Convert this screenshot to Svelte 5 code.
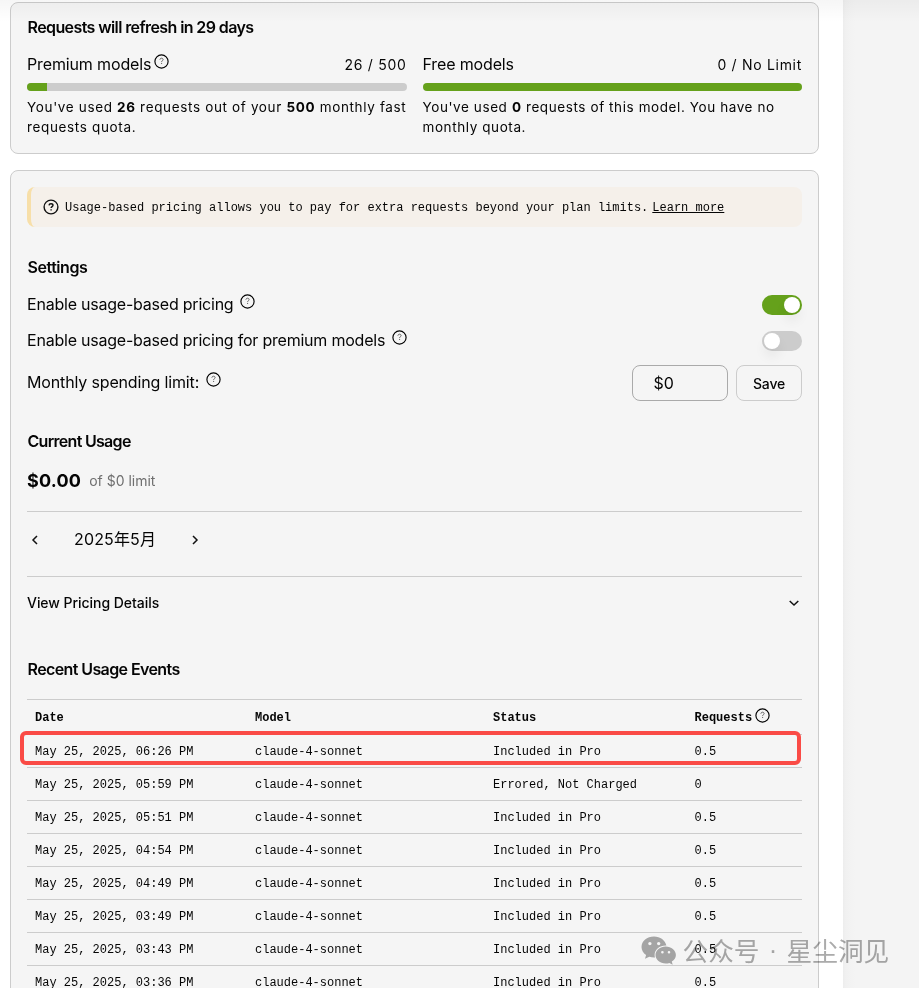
<script>
  const events = [
    ['06:26', 'Included in Pro', '0.5'],
    ['05:59', 'Errored, Not Charged', '0'],
    ['05:51', 'Included in Pro', '0.5'],
    ['04:54', 'Included in Pro', '0.5'],
    ['04:49', 'Included in Pro', '0.5'],
    ['03:49', 'Included in Pro', '0.5'],
    ['03:43', 'Included in Pro', '0.5'],
    ['03:36', 'Included in Pro', '0.5']
  ];
  const used = 26;
  const quota = 500;
</script>

{#snippet help()}
  <svg class="help" width="15" height="15" viewBox="0 0 15 15" fill="none">
    <circle cx="7.5" cy="7.5" r="6.6" stroke="#000" stroke-width="1.15" />
    <path d="M5.900 5.700C6 4.700 6.700 4.200 7.500 4.200c.9 0 1.600.5 1.600 1.300 0 1.100-1.500 1.200-1.500 2.600M7.600 9v1" stroke="#555" stroke-width=".9" />
  </svg>
{/snippet}

<div class="page">
  <main>
    <section class="card quota">
      <h2 class="t-refresh">Requests will refresh in 29 days</h2>
      <div class="models">
        <div class="model">
          <div class="head"><span class="name">Premium models {@render help()}</span><span class="count">{used} / {quota}</span></div>
          <div class="bar"><div class="fill" style="width: {(used / quota) * 100}%"></div></div>
          <p>You've used <b>{used}</b> requests out of your <b>{quota}</b> monthly fast<br />requests quota.</p>
        </div>
        <div class="model free">
          <div class="head"><span class="name">Free models</span><span class="count">0 / No Limit</span></div>
          <div class="bar"><div class="fill" style="width: 100%"></div></div>
          <p>You've used <b>0</b> requests of this model. You have no<br />monthly quota.</p>
        </div>
      </div>
    </section>

    <section class="card usage">
      <div class="notice">
        <svg width="16" height="16" viewBox="0 0 16 16" fill="none" stroke="#111" stroke-width="1.4">
          <circle cx="8" cy="8" r="6.9" />
          <path d="M6 6.4C6.1 5.2 7 4.700 8 4.700c1.100 0 2 .6 2 1.600 0 1.200-1.900 1.400-1.900 2.700M8.100 10.300v1.300" />
        </svg>
        <span>Usage-based pricing allows you to pay for extra requests beyond your plan limits.</span><a href="#learn">Learn more</a>
      </div>

      <h2 class="t-settings">Settings</h2>
      <div class="setting"><span class="label">Enable usage-based pricing</span>{@render help()}<span class="toggle on"><i></i></span></div>
      <div class="setting"><span class="label">Enable usage-based pricing for premium models</span>{@render help()}<span class="toggle"><i></i></span></div>
      <div class="setting limit"><span class="label">Monthly spending limit:</span>{@render help()}<span class="controls"><span class="input">$0</span><button>Save</button></span></div>

      <h2 class="t-current">Current Usage</h2>
      <div class="amount"><strong>$0.00</strong><span>of $0 limit</span></div>
      <div class="month">
        <svg width="16" height="16" viewBox="0 0 16 16" fill="none" stroke="#111" stroke-width="1.5"><path d="M10 4 6 8l4 4" /></svg>
        <span>2025年5月</span>
        <svg width="16" height="16" viewBox="0 0 16 16" fill="none" stroke="#111" stroke-width="1.5"><path d="M6 4l4 4-4 4" /></svg>
      </div>
      <div class="details">
        <span>View Pricing Details</span>
        <svg width="16" height="16" viewBox="0 0 16 16" fill="none" stroke="#111" stroke-width="1.5"><path d="M3.700 6 8 10l4.300-4" /></svg>
      </div>

      <h2 class="t-events">Recent Usage Events</h2>
      <div class="table">
        <div class="row header"><span>Date</span><span>Model</span><span>Status</span><span class="req">Requests {@render help()}</span></div>
        {#each events as [time, status, requests], i}
          <div class="row" class:marked={i === 0}>
            <span>May 25, 2025, {time} PM</span><span>claude-4-sonnet</span><span>{status}</span><span>{requests}</span>
          </div>
        {/each}
      </div>
    </section>
  </main>
  <aside></aside>
  <div class="topshade"></div>
  <div class="watermark">
    <svg width="36" height="30" viewBox="0 0 36 30">
      <path fill="#ababab" fill-rule="evenodd" d="M13 .5C6 .5.500 5.100.500 11c0 3.300 1.800 6.100 4.600 8.100L4 22.800l4.300-2.100c1.500.4 3 .7 4.800.7h.9c-.3-.9-.4-1.700-.4-2.500 0-5.200 4.900-9.400 11-9.400h.8C24.400 4.400 19.200.500 13 .500ZM8.900 5.900a1.700 1.700 0 1 1 0 3.400 1.700 1.700 0 0 1 0-3.400Zm8.800 0a1.700 1.700 0 1 1 0 3.400 1.700 1.700 0 0 1 0-3.400Z" />
      <path fill="#ababab" fill-rule="evenodd" d="M24.700 10.500c-5.600 0-10.200 3.800-10.200 8.500s4.600 8.500 10.200 8.500c1.300 0 2.600-.2 3.700-.6l3.300 1.900-.9-3.200c2.500-1.600 4.100-4 4.100-6.600 0-4.700-4.600-8.500-10.200-8.500Zm-3.300 4.500a1.300 1.300 0 1 1 0 2.600 1.300 1.300 0 0 1 0-2.600Zm6.600 0a1.300 1.300 0 1 1 0 2.600 1.300 1.300 0 0 1 0-2.600Z" />
    </svg>
    <span class="wm1">公众号</span><span class="dot">·</span><span>星尘洞见</span>
  </div>
</div>

<style>
  :global(body) { background: #fff; overflow: hidden; }
  .page, .page * { box-sizing: border-box; }
  .page {
    position: relative;
    display: flex;
    height: 988px;
    overflow: hidden;
    color: #050505;
    font: 16px/20px Inter, 'Noto Sans CJK SC', sans-serif;
  }
  main { flex: 0 0 843px; padding: 2px 24px 0 10px; background: #fff; }
  aside { flex: 1; background: linear-gradient(90deg, #ededed, #f1f1f1 3px, #f4f4f4 12px); }
  .topshade {
    position: absolute;
    inset: 0 0 auto;
    height: 22px;
    background: linear-gradient(rgb(0 0 0 / 3.5%), transparent);
  }
  .card { width: 809px; padding: 0 16px; border: 1px solid #ccc; border-radius: 8px; background: #f5f5f5; }
  .quota { height: 152px; padding-top: 14px; }
  .usage { height: 900px; margin-top: 16px; padding-top: 16px; }
  h2 { margin: 0; font-size: 16px; line-height: 20px; font-weight: 600; white-space: nowrap; letter-spacing: -0.6px; text-indent: 0.5px; }
  .t-current { letter-spacing: -0.7px; }
  .models { display: grid; grid-template-columns: repeat(2, minmax(0, 1fr)); gap: 16px; margin-top: 17px; }
  .head { display: flex; justify-content: space-between; height: 20px; white-space: nowrap; }
  .count { font-size: 14px; line-height: 22px; letter-spacing: 0.7px; }
  .help { flex: none; display: block; }
  .name { display: flex; gap: 3px; letter-spacing: -0.14px; }
  .name .help { margin-top: -0.5px; }
  .bar { height: 8px; margin-top: 9px; border-radius: 4px; background: #ccc; overflow: hidden; }
  .fill { height: 100%; background: #65a11b; }
  p { margin: 6px 0 0; font-size: 13.500px; line-height: 20px; letter-spacing: 0.65px; white-space: nowrap; }
  .free p { letter-spacing: 0.59px; }
  b { font-weight: 700; }
  .notice {
    display: flex;
    align-items: center;
    height: 40px;
    padding-left: 12px;
    border-left: 4px solid #f7dfa9;
    border-radius: 8px;
    background: #f5f0ea;
    font: 12px/16px 'Liberation Mono', monospace;
    white-space: nowrap;
  }
  .notice span { margin: 2px 0 0 6px; }
  .notice a { margin: 2px 0 0 4px; color: inherit; text-decoration: underline; text-underline-offset: 1px; }
  .t-settings { margin-top: 30px; letter-spacing: -0.45px; }
  .setting { display: flex; align-items: center; height: 36px; white-space: nowrap; }
  .t-settings + .setting { margin-top: 9px; }
  .label { letter-spacing: -0.22px; }
  .limit .label { letter-spacing: -0.15px; }
  .setting .help { margin: -6px 0 0 7px; }
  .toggle { width: 40px; height: 20px; margin: 2px 0 0 auto; padding: 2px; border-radius: 10px; background: #ccc; }
  .toggle i { display: block; width: 16px; height: 16px; border-radius: 50%; background: #fff; box-shadow: 0 8px 12px rgb(0 0 0 / 6%); }
  .toggle.on { background: #65a11b; }
  .toggle.on i { margin-left: 20px; }
  .limit { height: 48px; }
  .controls { display: flex; gap: 8px; margin: 2px 0 0 auto; }
  .input { width: 96px; height: 36px; padding-left: 20.500px; border: 1px solid #aaa; border-radius: 8px; line-height: 35px; }
  button { width: 66px; height: 36px; padding: 0; border: 1px solid #ccc; border-radius: 8px; background: none; color: inherit; font: 450 14px Inter, sans-serif; letter-spacing: -0.2px; }
  .t-current { margin-top: 25px; }
  .amount { display: flex; align-items: center; height: 60px; padding-bottom: 1px; border-bottom: 1px solid #ccc; margin-top: 1px; }
  .amount strong { font-size: 18px; font-weight: 650; letter-spacing: 0.2px; }
  .amount span { margin-left: 8px; font-size: 14px; color: #6f6f6f; }
  .month { display: flex; height: 65px; padding-top: 17px; border-bottom: 1px solid #ccc; }
  .month svg { margin-top: 3px; }
  .month span { width: 84px; margin: 0 29px 0 31px; white-space: nowrap; letter-spacing: 0.15px; }
  .details { display: flex; align-items: center; justify-content: space-between; height: 52px; font-size: 14px; font-weight: 500; letter-spacing: -0.04px; }
  .t-events { margin-top: 30px; }
  .table { margin-top: 20px; border-top: 1px solid #ccc; font: 12px/32px 'Liberation Mono', monospace; white-space: nowrap; }
  .row { position: relative; display: grid; grid-template-columns: 220px 238px 201.500px 1fr; height: 33px; padding: 1px 0 0 8px; border-bottom: 1px solid #ccc; }
  .header { height: 35px; line-height: 34px; font-weight: 700; }
  .req { display: flex; }
  .req .help { margin: 6.500px 0 0 3px; }
  .marked::after {
    content: '';
    position: absolute;
    inset: -4px 1px 2px -7px;
    border: 4px solid #fa4b46;
    border-radius: 6px;
  }
  .watermark {
    position: absolute;
    left: 641px;
    top: 936px;
    display: flex;
    color: #ababab;
    mix-blend-mode: multiply;
    font: 25.700px/28px 'Noto Sans CJK SC', sans-serif;
    white-space: nowrap;
  }
  .wm1 { margin-left: 5.500px; }
  .dot { width: 27px; text-align: center; font-family: 'Liberation Sans', sans-serif; }
</style>
